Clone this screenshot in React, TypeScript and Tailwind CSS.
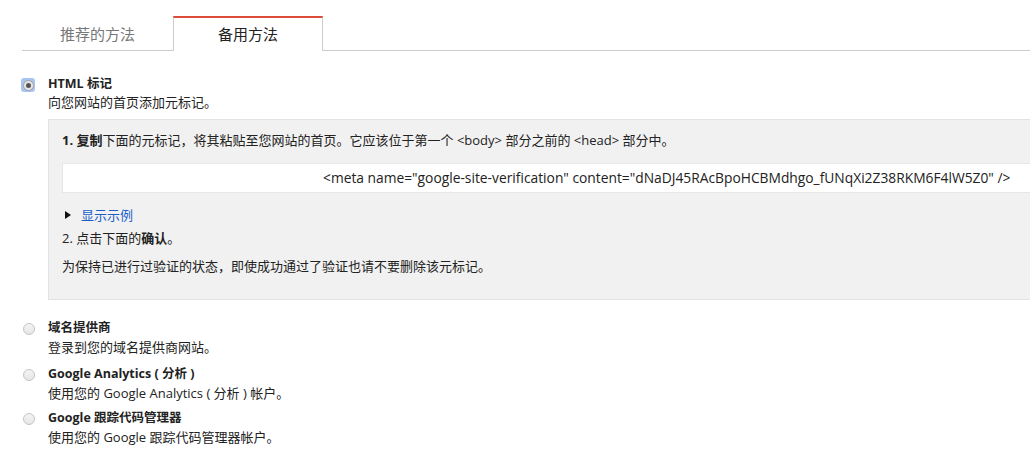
import React from "react";

const font = { fontFamily: '"Open Sans", "Noto Sans CJK SC", sans-serif' };

function Radio({ checked }: { checked?: boolean }) {
  if (checked) {
    return (
      <div className="w-[14px] h-[14px] rounded-[3px] bg-[#a8c4f2] flex items-center justify-center shrink-0">
        <div className="w-[11px] h-[11px] rounded-full bg-[#e6e6e6] border border-[#a0a0a0] flex items-center justify-center">
          <div className="w-[5px] h-[5px] rounded-full bg-[#555]" />
        </div>
      </div>
    );
  }
  return (
    <div className="w-[13px] h-[13px] flex items-center justify-center shrink-0">
      <div className="w-[12px] h-[12px] rounded-full border border-[#c4c4c4] bg-gradient-to-b from-[#f4f4f4] to-[#e6e6e6]" />
    </div>
  );
}

function Option({
  title,
  desc,
  className,
}: {
  title: string;
  desc: string;
  className?: string;
}) {
  return (
    <div className={"flex pl-[22px] " + (className ?? "")}>
      <div className="pt-[3px]">
        <Radio />
      </div>
      <div className="ml-[13px] leading-[18px] text-[#222]">
        <div className="font-bold text-[12.5px]">{title}</div>
        <div className="mt-[1px] text-[13px]">{desc}</div>
      </div>
    </div>
  );
}

export default function App() {
  return (
    <div className="w-[1030px] h-[467px] bg-white overflow-hidden" style={font}>
      <div className="pt-[16px] pl-[22px]">
        <div className="flex border-b border-[#cccccc] w-[1100px] h-[35px]">
          <div className="w-[151px] flex items-center justify-center text-[15px] text-[#777] pt-[2px]">
            推荐的方法
          </div>
          <div className="w-[150px] h-[35px] -mb-px bg-white border-t-2 border-t-[#dd4b39] border-x border-x-[#cccccc] flex items-center justify-center text-[15px] text-[#222]">
            备用方法
          </div>
        </div>
      </div>

      <div className="flex pl-[21px] mt-[24px]">
        <div className="pt-[3px]">
          <Radio checked />
        </div>
        <div className="ml-[13px] leading-[18px] text-[#222]">
          <div className="font-bold text-[12.5px]">HTML 标记</div>
          <div className="text-[13px]">向您网站的首页添加元标记。</div>
        </div>
      </div>

      <div className="ml-[48px] mt-[8px] w-[1000px] bg-[#f1f1f1] border border-[#e3e3e3] pl-[13px] pt-[11px] pb-[24px] text-[13px] leading-[18px] text-[#222]">
        <div className="whitespace-nowrap">
          <span className="font-bold">1. 复制</span>下面的元标记，将其粘贴至您网站的首页。它应该位于第一个 &lt;body&gt; 部分之前的 &lt;head&gt; 部分中。
        </div>
        <div className="mt-[14px] h-[30px] bg-white border border-[#e6e6e6] flex items-center pl-[260px] text-[13.8px] text-[#222] whitespace-nowrap">
          &lt;meta name="google-site-verification" content="dNaDJ45RAcBpoHCBMdhgo_fUNqXi2Z38RKM6F4lW5Z0" /&gt;
        </div>
        <div className="mt-[13px] flex items-center pl-[3px]">
          <svg width="6" height="8" viewBox="0 0 6 8" className="shrink-0">
            <path d="M0 0 L6 4 L0 8 Z" fill="#111" />
          </svg>
          <span className="ml-[10px] text-[#1a5fc9]">显示示例</span>
        </div>
        <div className="mt-[5px]">
          2. 点击下面的<span className="font-bold">确认</span>。
        </div>
        <div className="mt-[10px]">为保持已进行过验证的状态，即使成功通过了验证也请不要删除该元标记。</div>
      </div>

      <Option className="mt-[19px]" title="域名提供商" desc="登录到您的域名提供商网站。" />
      <Option className="mt-[9px]" title="Google Analytics ( 分析 )" desc="使用您的 Google Analytics ( 分析 ) 帐户。" />
      <Option className="mt-[7px]" title="Google 跟踪代码管理器" desc="使用您的 Google 跟踪代码管理器帐户。" />
    </div>
  );
}
